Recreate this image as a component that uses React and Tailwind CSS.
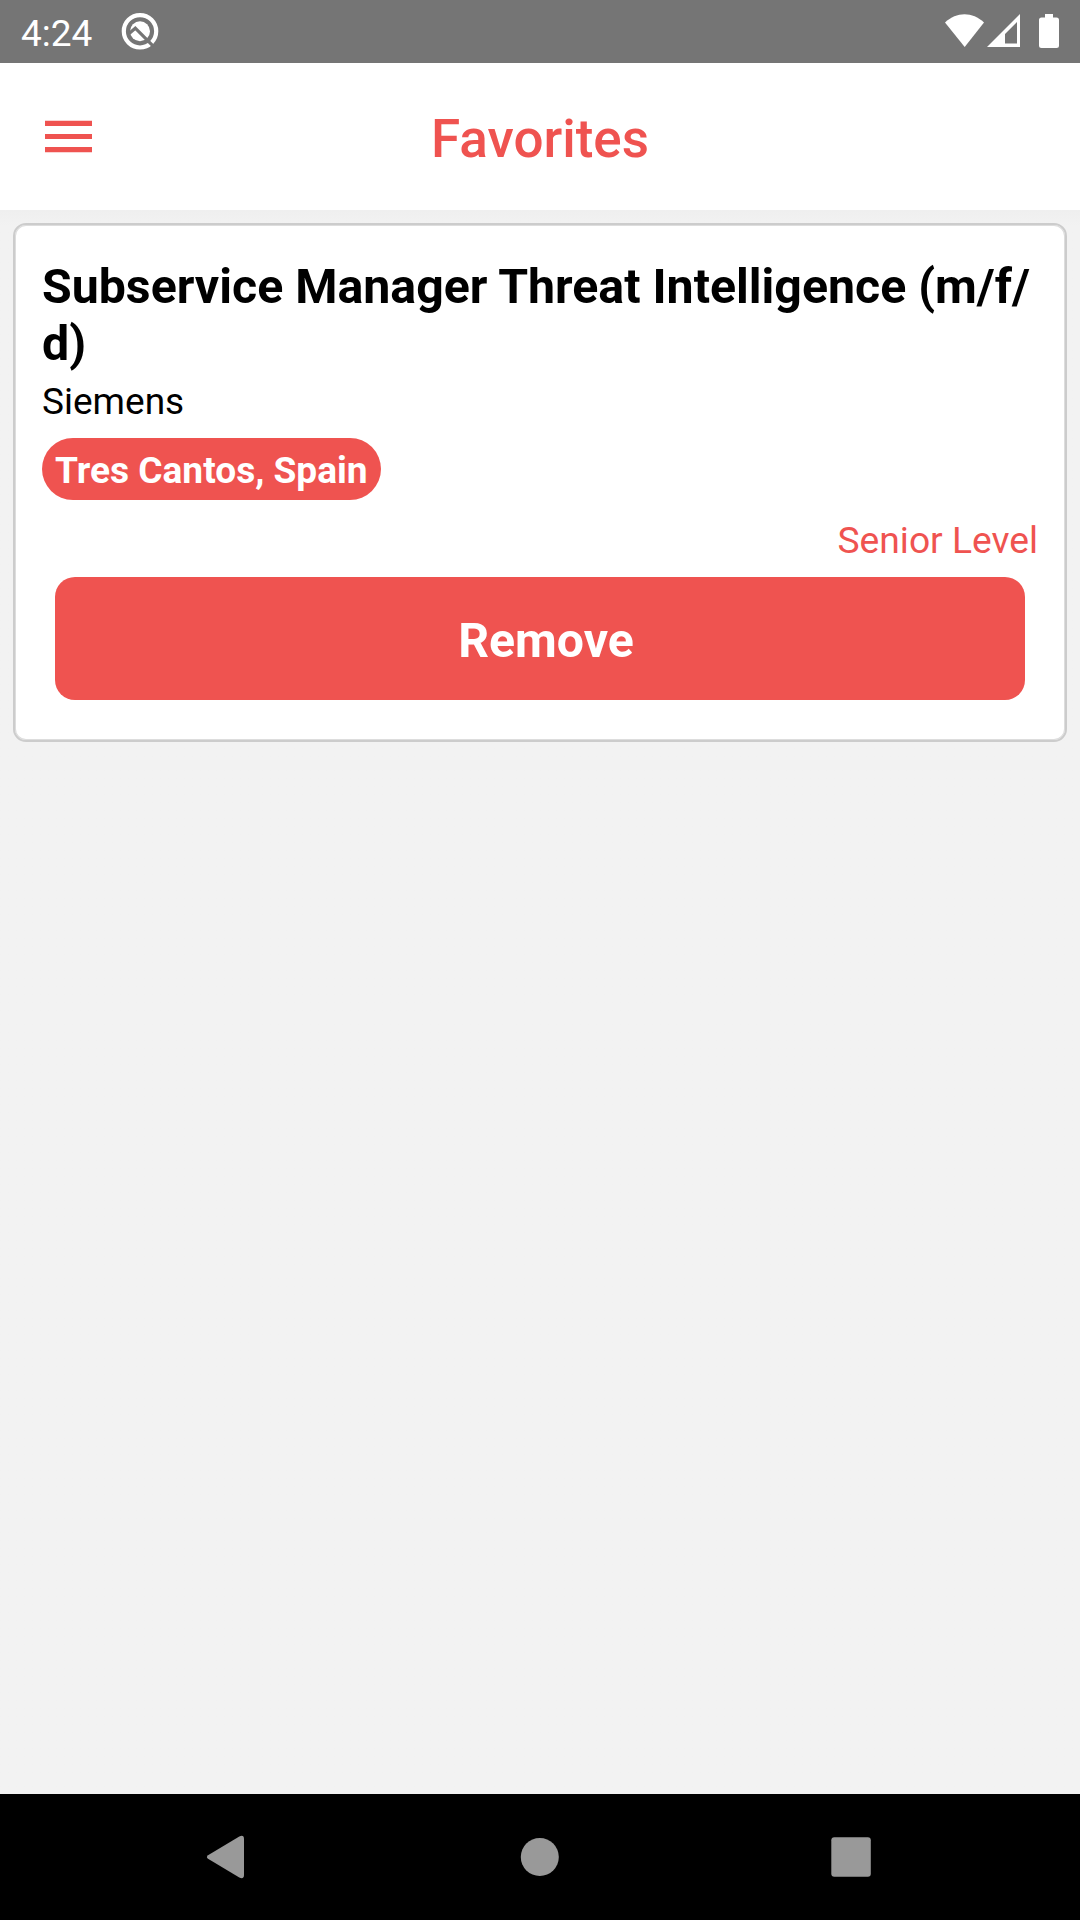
function StatusBar() {
  return (
    <div className="flex h-[63px] shrink-0 items-center bg-[#757575] pl-[21px] text-white">
      <span className="mt-[3px] w-[100px] text-[37px] leading-[43px]">4:24</span>
      <svg className="mb-px h-[38px] w-[38px]" viewBox="0 0 38 38" fill="none">
        <circle cx="19" cy="19.3" r="16.2" stroke="white" strokeWidth="4.2" />
        <circle cx="19" cy="19.3" r="10" fill="white" />
        <path d="M7.5 22L14.3 16.2L32.5 34.4" stroke="#757575" strokeWidth="3.2" />
      </svg>
      <div className="flex-1" />
      <svg className="h-[63px] w-[135px]" viewBox="945 0 135 63" fill="white">
        <path d="M945 22.6C956.5 11.5 972.5 11.5 984 22.6L964.7 47Z" />
        <path fillRule="evenodd" d="M1020 14V47H987ZM1017 22L1005 34V43.5H1017Z" />
        <path d="M1045 14h8v3.4h3.5a2.5 2.5 0 0 1 2.5 2.5V45.5a2.5 2.5 0 0 1-2.5 2.5h-15a2.5 2.5 0 0 1-2.5-2.5V19.9a2.5 2.5 0 0 1 2.5-2.5h3.5Z" />
      </svg>
    </div>
  );
}

function Header() {
  return (
    <header className="grid h-[147px] shrink-0 grid-cols-[1fr_auto_1fr] items-center bg-white text-[#ef5350]">
      <svg className="ml-[45px] h-[33px] w-[47px]" viewBox="0 0 47 33" fill="currentColor">
        <path d="M0 .7h47v5.3H0zM0 14h47v5H0zM0 27h47v5.3H0z" />
      </svg>
      <h1 className="mt-[4px] text-[53px] leading-[62px] font-medium">Favorites</h1>
      <div />
    </header>
  );
}

function JobCard() {
  return (
    <article className="mx-[13px] mt-[13px] flex h-[519px] flex-col rounded-[13px] border-2 border-[#cccccc] bg-white px-[27px] pt-[33px] shadow-[inset_0_0_0_1px_#dddddd]">
      <h2 className="text-[48.25px] leading-[57px] font-bold whitespace-nowrap text-black">
        Subservice Manager Threat Intelligence (m/f/
        <br />
        d)
      </h2>
      <p className="mt-2 text-[37px] leading-[43px] text-black">Siemens</p>
      <div className="mt-[15px] flex h-[62px] w-[339px] items-center self-start rounded-full bg-[#ef5350] pt-[3px] pl-[13px] text-[37.1px] font-bold whitespace-nowrap text-white">
        Tres Cantos, Spain
      </div>
      <p className="mt-[19px] text-right text-[37.2px] leading-[43px] text-[#ef5350]">Senior Level</p>
      <button className="mx-[13px] mt-[15px] h-[123px] rounded-[20px] bg-[#ef5350] pt-[4px] pl-[12px] text-[48.2px] leading-[57px] font-bold text-white">
        Remove
      </button>
    </article>
  );
}

function NavigationBar() {
  return (
    <nav className="h-[126px] shrink-0 bg-black">
      <svg className="h-[126px] w-full" viewBox="0 0 1080 126" fill="#999999">
        <path d="M208 61.2L239.3 42.4Q244 40.5 244 45V81Q244 85.5 239.3 83.6L208 64.8Q205.8 63 208 61.2Z" />
        <circle cx="539.8" cy="63" r="19" />
        <rect x="831.3" y="43.3" width="39.5" height="39.5" rx="3" />
      </svg>
    </nav>
  );
}

export default function App() {
  return (
    <div className="flex h-[1920px] w-[1080px] flex-col overflow-hidden bg-[#f2f2f2] font-['Roboto',sans-serif]">
      <StatusBar />
      <Header />
      <main className="flex-1 bg-linear-to-b from-[#efefef] to-[#f2f2f2] to-[16px]">
        <JobCard />
      </main>
      <NavigationBar />
    </div>
  );
}
